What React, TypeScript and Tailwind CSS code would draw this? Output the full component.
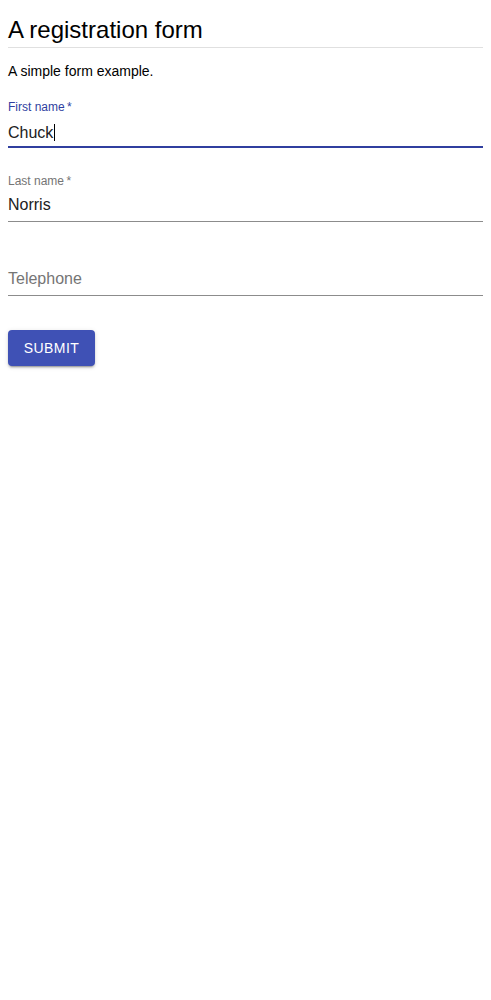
const font = { fontFamily: '"Liberation Sans", Arial, sans-serif' };

function Field({
  label,
  value,
  placeholder,
  focused,
}: {
  label?: string;
  value?: string;
  placeholder?: string;
  focused?: boolean;
}) {
  return (
    <div
      className={
        focused
          ? "flex flex-col border-b-2 border-[#303f9f] pb-[6px]"
          : "flex flex-col border-b border-[#8c8c8c] pb-[7px]"
      }
    >
      <div
        className={
          focused
            ? "h-[12px] text-[12px] leading-[12px] text-[#303f9f]"
            : "h-[12px] text-[12px] leading-[12px] text-[#757575]"
        }
      >
        {label ? `${label}\u2009*` : ""}
      </div>
      <div className="mt-2 h-[19px] text-[16px] leading-[19px] text-[#212121]">
        {value ? (
          <span>
            {value}
            {focused && <span className="ml-px inline-block h-[17px] w-px translate-y-[3px] bg-black" />}
          </span>
        ) : (
          <span className="text-[#757575]">{placeholder}</span>
        )}
      </div>
    </div>
  );
}

export default function App() {
  return (
    <div className="min-h-screen bg-white px-2 pt-4" style={font}>
      <h1 className="border-b border-[#e0e0e0] pb-[3px] text-[24px] leading-[28px] font-normal text-black">
        A registration form
      </h1>
      <p className="mt-[13px] text-[14px] leading-[20px] text-black">A simple form example.</p>

      <form className="mt-5 flex flex-col gap-[27px]" onSubmit={(e) => e.preventDefault()}>
        <Field label="First name" value="Chuck" focused />
        <Field label="Last name" value="Norris" />
        <Field placeholder="Telephone" />
      </form>

      <button
        type="button"
        className="mt-[34px] h-9 w-[87px] rounded bg-[#3f51b5] text-[14px] font-medium tracking-[0.4px] text-white shadow-[0_3px_1px_-2px_rgba(0,0,0,0.2),0_2px_2px_0_rgba(0,0,0,0.14),0_1px_5px_0_rgba(0,0,0,0.12)]"
      >
        SUBMIT
      </button>
    </div>
  );
}
